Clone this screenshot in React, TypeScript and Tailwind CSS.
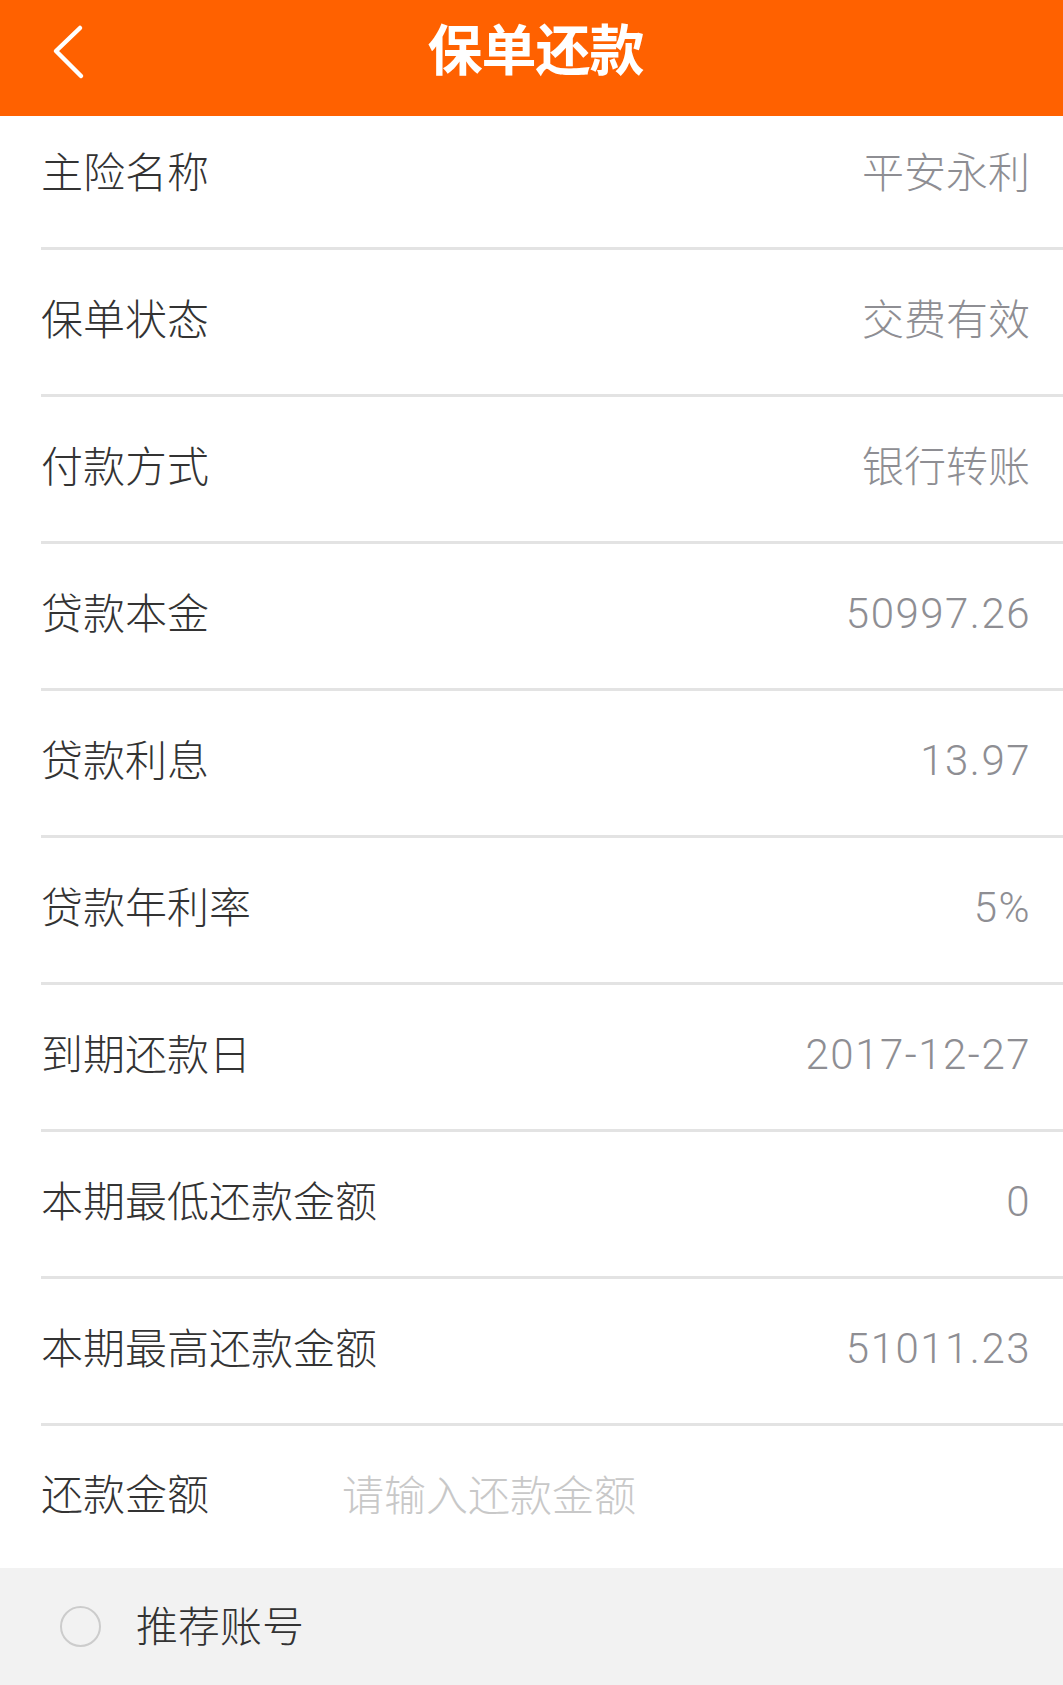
const rows = [
  { label: '主险名称', value: '平安永利' },
  { label: '保单状态', value: '交费有效' },
  { label: '付款方式', value: '银行转账' },
  { label: '贷款本金', value: '50997.26', num: true },
  { label: '贷款利息', value: '13.97', num: true },
  { label: '贷款年利率', value: '5%', num: true },
  { label: '到期还款日', value: '2017-12-27', num: true },
  { label: '本期最低还款金额', value: '0', num: true },
  { label: '本期最高还款金额', value: '51011.23', num: true },
];

export default function App() {
  return (
    <div
      className="w-[1063px] h-[1685px] bg-white overflow-hidden flex flex-col"
      style={{ fontFamily: '"Noto Sans CJK SC", "Noto Sans", sans-serif' }}
    >
      <div className="h-[116px] shrink-0 bg-[#ff6100] relative flex justify-center pl-[8px]">
        <button className="absolute left-[44px] top-[16px] w-[50px] h-[72px] flex items-center justify-center">
          <svg width="34" height="56" viewBox="0 0 34 56" fill="none">
            <path d="M28 4 L4 27 L29 52" stroke="white" strokeWidth="4.5" strokeLinecap="round" strokeLinejoin="round" />
          </svg>
        </button>
        <h1 className="text-white text-[55px] font-bold leading-none mt-[19px] tracking-[-1px]">保单还款</h1>
      </div>

      <div className="flex flex-col">
        {rows.map((r, i) => (
          <div key={r.label} className="pl-[41px]">
            <div
              className={`flex items-center justify-between ${i === 0 ? 'h-[131px] pb-[23px]' : 'h-[144px] pb-[10px]'}`}
            >
              <span className="text-[42px] font-light text-[#333333] leading-none">{r.label}</span>
              {r.num ? (
                <span className="mr-[32px] mt-[6px] text-[42px] font-light text-[#8e8e93] leading-none tracking-[1.5px] font-['Roboto','Noto_Sans_CJK_SC',sans-serif]">
                  {r.value}
                </span>
              ) : (
                <span className="mr-[33px] text-[42px] font-light text-[#8e8e93] leading-none">{r.value}</span>
              )}
            </div>
            <div className="h-[3px] bg-[#e3e3e3]" />
          </div>
        ))}
        <div className="pl-[41px] h-[142px] flex items-center pb-[10px]">
          <span className="text-[42px] font-light text-[#333333] leading-none w-[301px] shrink-0">还款金额</span>
          <input
            className="text-[42px] font-light leading-none outline-none bg-transparent placeholder:text-[#c8c8c8] flex-1"
            placeholder="请输入还款金额"
          />
        </div>
      </div>

      <div className="flex-1 bg-[#f2f2f2] flex items-center pl-[60px]">
        <span className="w-[41px] h-[41px] rounded-full border-2 border-[#cccccc]" />
        <span className="ml-[35px] mb-[6px] text-[42px] font-light text-[#333333] leading-none">推荐账号</span>
      </div>
    </div>
  );
}
